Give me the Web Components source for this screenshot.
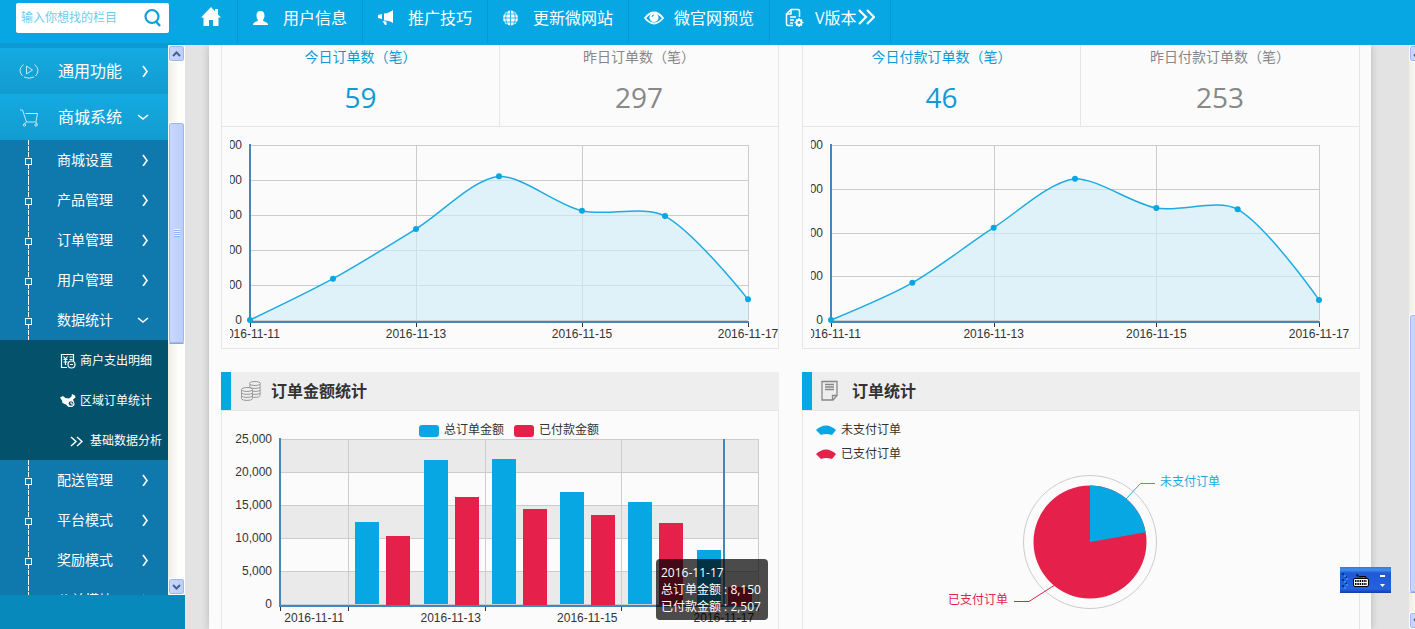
<!DOCTYPE html>
<html lang="zh-CN">
<head>
<meta charset="utf-8">
<title>商城后台 - 数据统计</title>
<style>
html, body { margin: 0; height: 100%; }
body { font-family: "Open Sans", "Noto Sans CJK SC", sans-serif; overflow: hidden; }
</style>
</head>
<body>
<admin-app></admin-app>
<script>
const FONT = '"Liberation Sans", "Noto Sans CJK SC", sans-serif';

function define(name, html, setup) {
  const tpl = document.createElement('template');
  tpl.innerHTML = html;
  customElements.define(name, class extends HTMLElement {
    constructor() {
      super();
      this.attachShadow({ mode: 'open' }).appendChild(tpl.content.cloneNode(true));
    }
    connectedCallback() { if (setup) setup(this, this.shadowRoot); }
  });
}

/* ---------- icons ---------- */
const ICONS = {
  home: [20, 20, '<path d="M10 0 0 10.500h2.500V19H8v-6h4v6h5.500v-8.500H20L17 7.500V2h-3v2.500z" fill="currentColor"/>'],
  user: [20, 20, '<path d="M7.500 3c3 0 4 2 4 5 0 2-1 3-1.500 4 0 2 5 1.500 5 5H0c0-3.500 5-3 5-5-.5-1-1.500-2-1.500-4 0-3 1-5 4-5z" fill="currentColor"/>'],
  horn: [20, 20, '<path d="M6 5.500c3.500 0 6-1.500 9-3.500v13c-3-2-5.500-2.500-9-2.500zM0 7l4-1v5l-4-1zM4.500 13l4 .5V17H7z" fill="currentColor"/>'],
  globe: [20, 20, '<circle cx="7.500" cy="10" r="7.500" fill="currentColor"/><path d="M0 10h15M1 6h13M1 14h13M7.500 2v16M4.500 3Q1 10 4.500 17M10.500 3q3.500 7 0 14" fill="none" stroke="#07a7e3" stroke-width=".8"/>'],
  eye: [20, 20, '<path d="M1 10Q10-1 19 10 10 21 1 10z" fill="none" stroke="currentColor" stroke-width="1.800"/><circle cx="10" cy="9.500" r="4.500" fill="currentColor"/><path d="M8 9a2 2 0 0 1 2-2" stroke="#07a7e3" fill="none"/>'],
  doc: [20, 20, '<path d="M8 17.500H3a1.500 1.500 0 0 1-1.500-1.500V6L6 1.500h7A1.500 1.500 0 0 1 14.500 3v6M6 2v4H2M5 9h6M5 12h4M5 15h3" fill="none" stroke="currentColor" stroke-width="1.500"/><circle cx="14" cy="14.500" r="2.500" fill="none" stroke="currentColor" stroke-width="2"/><path d="M14 10v9M9.500 14.500h9M11 11.500l6 6M17 11.500l-6 6" stroke="currentColor" stroke-width="1.200"/><circle cx="14" cy="14.500" r="1.500" fill="#07a7e3"/>'],
  double: [18, 20, '<path d="M2 2l7 7-7 7M10 2l7 7-7 7" fill="none" stroke="currentColor" stroke-width="2.200"/>'],
  search: [18, 20, '<circle cx="8" cy="8.500" r="6.500" fill="none" stroke="#0a9fda" stroke-width="2.200"/><path d="M12 13.500l4 4.500" stroke="#0a9fda" stroke-width="2.400"/>'],
  play: [20, 18, '<path d="M4.500 2.500Q-2 8 3.500 14M15.500 2.500Q22 8 16.500 14M5 15q5 2.500 10 0" fill="none" stroke="currentColor"/><path d="M7.500 4v8l6-4z" fill="none" stroke="currentColor"/>'],
  cart: [20, 20, '<path d="M1 3h2.500l4 12h10M6.500 6.500h12l-1.500 8" fill="none" stroke="currentColor"/><path d="M7.500 15l-3 2.500M17 15l1.500 2.500" stroke="currentColor"/><circle cx="5.500" cy="18" r="1.200" fill="none" stroke="currentColor"/><circle cx="17" cy="18" r="1.200" fill="none" stroke="currentColor"/>'],
  right: [12, 12, '<path d="M4 1l4 5.500L4 12" fill="none" stroke="currentColor" stroke-width="1.600"/>'],
  down: [12, 12, '<path d="M1 4l5 4 5-4" fill="none" stroke="currentColor" stroke-width="1.600"/>'],
  bill: [16, 16, '<path d="M7 14.500H1.500v-13h12V8M3.500 3.500l2 2.500 2-2.500M3.500 6.500h4M3.500 9h4M5.500 6v6M9.500 4h3M9.500 6.500h3" fill="none" stroke="currentColor" stroke-width="1.200"/><circle cx="11.500" cy="11.500" r="3.500" fill="none" stroke="currentColor" stroke-width="1.200"/><path d="M10 11.500h3" stroke="currentColor"/>'],
  map: [16, 16, '<path d="M0 4.500 3 3l2.500 2L9 5.500l2.500-2L12 1l3 1.500.5 2-2.500 2 1 2.500.5 3-2.500 2H8.500L6 11.500 2.500 10 2 7.500z" fill="currentColor"/><circle cx="11" cy="10.500" r="2.800" fill="#04516c" stroke="currentColor"/><path d="M11 8.500V11h2" stroke="currentColor" fill="none"/>'],
  more: [14, 14, '<path d="M1 3l5 4.500L1 12M7 3l5 4.500L7 12" fill="none" stroke="currentColor" stroke-width="1.400"/>'],
  coins: [22, 22, '<g fill="#eee" stroke="#999"><path d="M10 3.500v12c0 2.500 10 2.500 10 0v-12"/><ellipse cx="15" cy="3.500" rx="5.500" ry="2"/><path d="M9.500 6.500c0 2.500 11 2.500 11 0M9.500 9.500c0 2.500 11 2.500 11 0M9.500 12.500c0 2.500 11 2.500 11 0" /><path d="M1.500 9.500v9c0 2.500 11 2.500 11 0v-9"/><ellipse cx="7" cy="9.500" rx="5.500" ry="2"/><path d="M1.500 12.500c0 2.500 11 2.500 11 0M1.500 15.500c0 2.500 11 2.500 11 0"/></g>'],
  page: [22, 22, '<path d="M1 1.500h15v14l-4 4.500H1z" fill="none" stroke="#888" stroke-width="1.300"/><path d="M11.500 20v-4.500H16M4 4.500h9M4 7h9M4 9.500h9" fill="none" stroke="#888" stroke-width="1.300"/>']
};
define('ui-icon', '<style>:host{display:block;flex:none}svg{display:block}</style><div></div>', (el, root) => {
  const [w, h, body] = ICONS[el.getAttribute('name')];
  root.querySelector('div').innerHTML = `<svg width="${w}" height="${h}" viewBox="0 0 ${w} ${h}" aria-hidden="true">${body}</svg>`;
});

/* ---------- top bar ---------- */
define('search-box', `
<style>
:host { display: block; }
form { display: flex; align-items: center; box-sizing: border-box; width: 153px; height: 30px; padding: 0 7px 0 5px; background: #fff; border-radius: 2px; }
input { flex: 1; min-width: 0; border: 0; padding: 0; outline: 0; background: none; font: 12px/18px ${FONT}; color: #07a7e3; }
input::placeholder { color: #6ccdee; opacity: 1; }
button { border: 0; padding: 0; background: none; cursor: pointer; }
</style>
<form><input type="text" aria-label="栏目搜索" placeholder="输入你想找的栏目"><button type="button" aria-label="搜索"><ui-icon name="search"></ui-icon></button></form>`);

define('top-bar', `
<style>
:host { display: flex; background: #07a7e3; height: 45px; overflow: hidden; }
.brand { box-sizing: border-box; width: 185px; padding: 3px 0 0 16px; border-bottom: 2px solid #0a9ad6; }
.home { display: flex; width: 52px; justify-content: center; padding-top: 7px; color: #fff; box-sizing: border-box; }
nav { display: flex; height: 43px; border-right: 1px solid #0798d3; }
nav a { display: flex; align-items: center; box-sizing: border-box; height: 43px; padding: 0 15px 7px; border-left: 1px solid #0798d3; color: #fff; font-size: 16px; line-height: 24px; text-decoration: none; white-space: nowrap; }
nav a ui-icon:first-child { margin-right: 10px; }
</style>
<div class="brand"><search-box></search-box></div>
<a class="home" href="#" aria-label="首页"><ui-icon name="home"></ui-icon></a>
<nav>
<a href="#"><ui-icon name="user"></ui-icon>用户信息</a>
<a href="#"><ui-icon name="horn"></ui-icon>推广技巧</a>
<a href="#"><ui-icon name="globe"></ui-icon>更新微网站</a>
<a href="#"><ui-icon name="eye"></ui-icon>微官网预览</a>
<a href="#"><ui-icon name="doc"></ui-icon>V版本<ui-icon name="double"></ui-icon></a>
</nav>`);

/* ---------- scroll bar ---------- */
define('scroll-bar', `
<style>
:host { display: flex; flex-direction: column; width: 17px; background: linear-gradient(90deg, #efede4, #fdfdf9 60%, #fefefb); }
.btn, .thumb { box-sizing: border-box; width: 17px; border: 1px solid #fff; border-radius: 3px; background: linear-gradient(90deg, #cbd8ff, #bacdfb); box-shadow: inset 0 0 0 1px #9db8ee; flex: none; }
.btn { height: 17px; display: flex; align-items: center; justify-content: center; }
.thumb { display: flex; align-items: center; justify-content: center; margin-top: var(--before); height: var(--size); border-bottom-color: #8aa5dc; }
.grip { width: 6px; height: 8px; background: repeating-linear-gradient(#eef4fe 0 1px, #8cb0f8 1px 2px); }
.space { flex: 1; }
svg { display: block; }
</style>
<div class="btn"><svg width="9" height="6" viewBox="0 0 9 6"><path d="M1 5l3.500-3.500L8 5" fill="none" stroke="#4d6185" stroke-width="2"/></svg></div>
<div class="thumb"><div class="grip"></div></div>
<div class="space"></div>
<div class="btn"><svg width="9" height="6" viewBox="0 0 9 6"><path d="M1 1l3.500 3.500L8 1" fill="none" stroke="#4d6185" stroke-width="2"/></svg></div>`);

/* ---------- side menu ---------- */
define('side-menu', `
<style>
:host { display: flex; flex-direction: column; width: 185px; overflow: hidden; background: #0789bb; padding-bottom: 34px; box-sizing: border-box; }
.view { display: flex; flex: 1; min-height: 0; overflow: hidden; }
.view > nav { width: 168px; overflow: hidden; padding-top: 3px; box-sizing: border-box; background: #109ad3; }
a { display: flex; align-items: center; box-sizing: border-box; color: #fff; text-decoration: none; }
a span { flex: 1; white-space: nowrap; }
.group { height: 46px; padding: 0 17px 0 19px; background: linear-gradient(#14aae1, #129ccf); font-size: 16px; line-height: 24px; }
.group > ui-icon:first-child { width: 39px; opacity: .75; }
.item { height: 40px; padding-right: 17px; background: #0f78ad; font-size: 14px; line-height: 20px; }
.open { padding-right: 19px; }
.rail { position: relative; flex: none; width: 57px; height: 40px; background: linear-gradient(90deg, transparent 28px, #fff 28px 29px, transparent 29px); }
.rail::before { content: ""; display: block; height: 40px; background: repeating-linear-gradient(transparent 0 5px, #0f78ad 5px 6px); }
.rail::after { content: ""; position: absolute; left: 25px; top: 18px; width: 5px; height: 5px; border: 1px solid #fff; background: #0f78ad; }
.leaf { height: 40px; padding: 2px 0 0 60px; gap: 4px; background: #04516c; font-size: 12px; line-height: 18px; }
.deep { padding-left: 70px; gap: 6px; }
scroll-bar { --before: 60px; --size: 222px; }
</style>
<div class="view">
<nav></nav>
<scroll-bar></scroll-bar>
</div>`, (el, root) => {
  const group = (icon, t, a) => `<a class="group${a === 'down' ? ' open' : ''}" href="#"><ui-icon name="${icon}"></ui-icon><span>${t}</span><ui-icon name="${a}"></ui-icon></a>`;
  const item = (t, a = 'right') => `<a class="item${a === 'down' ? ' open' : ''}" href="#"><i class="rail"></i><span>${t}</span><ui-icon name="${a}"></ui-icon></a>`;
  const leaf = (icon, t, c = '') => `<a class="leaf ${c}" href="#"><ui-icon name="${icon}"></ui-icon><span>${t}</span></a>`;
  root.querySelector('nav').innerHTML =
    group('play', '通用功能', 'right') + group('cart', '商城系统', 'down') +
    item('商城设置') + item('产品管理') + item('订单管理') + item('用户管理') + item('数据统计', 'down') +
    leaf('bill', '商户支出明细') + leaf('map', '区域订单统计') + leaf('more', '基础数据分析', 'deep') +
    item('配送管理') + item('平台模式') + item('奖励模式') + item('公益模块');
});

/* ---------- cards ---------- */
define('stat-pair', `
<style>
:host { display: grid; grid-template-columns: 1fr 1fr; border-bottom: 1px solid #e6e6e6; }
div { text-align: center; color: #888; }
.now { color: #1199d4; border-right: 1px solid #e6e6e6; }
p { margin: 0; font-size: 14px; line-height: 24px; text-spacing-trim: space-all; }
strong { display: block; font-weight: 500; font-size: 28px; line-height: 57px; }
</style>
<div class="now"><p></p><strong></strong></div><div><p></p><strong></strong></div>`, (el, root) => {
  const p = root.querySelectorAll('p'), s = root.querySelectorAll('strong');
  p[0].textContent = '今日' + el.getAttribute('label') + '（笔）';
  p[1].textContent = '昨日' + el.getAttribute('label') + '（笔）';
  s[0].textContent = el.getAttribute('today');
  s[1].textContent = el.getAttribute('yesterday');
});

define('plain-card', '<style>:host{display:block;border:1px solid #e6e6e6;border-top:0;min-width:0}</style><slot></slot>');
define('titled-card', `
<style>
:host { display: block; min-width: 0; }
header { display: flex; align-items: center; height: 38px; gap: 9px; padding-left: 9px; border-left: 10px solid #07a7e3; background: #eee; }
h2 { margin: 0; font-size: 16px; line-height: 24px; font-weight: 700; color: #333; }
section { border: 1px solid #e6e6e6; }
</style>
<header><slot name="icon"></slot><h2><slot name="title"></slot></h2></header>
<section><slot></slot></section>`);

/* ---------- charts ---------- */
const DAYS = [11, 12, 13, 14, 15, 16, 17].map(d => '2016-11-' + d);
const CHART_CSS = `svg{display:block;width:100%}text{font:12px ${FONT};fill:#333}`;
const line = (x1, y1, x2, y2, c, w = 1) => `<path d="M${x1} ${y1}L${x2} ${y2}" stroke="${c}" stroke-width="${w}" fill="none"/>`;
function onResize(el, draw) {
  draw(el.clientWidth);
  new ResizeObserver(() => draw(el.clientWidth)).observe(el);
}

/* Bezier path through the points; tangents follow the neighbouring points and
   control points never leave the vertical range of the data. */
function smoothPath(pts, k = 0.3) {
  const ys = pts.map(p => p[1]), lo = Math.min(...ys), hi = Math.max(...ys);
  const fit = y => Math.max(lo, Math.min(hi, y));
  const ctl = pts.map((p, i) => {
    if (i === 0 || i === pts.length - 1) return [p, p];
    const a = pts[i - 1], b = pts[i + 1];
    const vx = (b[0] - a[0]) * k, vy = (b[1] - a[1]) * k;
    const d0 = Math.hypot(p[0] - a[0], p[1] - a[1]), d1 = Math.hypot(p[0] - b[0], p[1] - b[1]);
    const r0 = d0 / (d0 + d1), r1 = d1 / (d0 + d1);
    return [[p[0] - vx * r0, fit(p[1] - vy * r0)], [p[0] + vx * r1, fit(p[1] + vy * r1)]];
  });
  return 'M' + pts[0] + pts.slice(1).map((p, i) => `C${ctl[i][1]} ${ctl[i + 1][0]} ${p}`).join('');
}

define('line-chart', `<style>:host{display:block;margin-left:8px;overflow:hidden}${CHART_CSS}</style><svg height="221" role="img"></svg>`, (el, root) => {
  const values = el.getAttribute('values').split(',').map(Number);
  const max = +el.getAttribute('max'), inset = +el.getAttribute('inset');
  onResize(el, w => {
    const L = 20, R = w - inset, T = 18, B = 193, steps = max / 100;
    const X = i => L + (R - L) * i / 6;
    const pts = values.map((v, i) => [X(i), B - (B - T) * v / max]);
    let s = '';
    for (let i = 0; i <= steps; i++) {
      const y = Math.round(B - (B - T) * i / steps);
      s += line(L, y + .5, R, y + .5, '#ccc') + `<text x="${L - 8}" y="${y + 4}" text-anchor="end">${i * 100}</text>`;
    }
    for (const i of [2, 4, 6]) s += line(Math.round(X(i)) + .5, T, Math.round(X(i)) + .5, B, '#ccc');
    for (const i of [0, 2, 4, 6]) {
      s += line(Math.round(X(i)) + .5, B + 3, Math.round(X(i)) + .5, B + 7, '#333');
      s += `<text x="${X(i)}" y="211" text-anchor="middle">${DAYS[i]}</text>`;
    }
    s += line(L, T - 1, L, B + 3, '#48b', 2) + line(L - 1, B + 2, R + 1, B + 2, '#48b', 2);
    const d = smoothPath(pts);
    s += `<path d="${d}L${R} ${B}L${L} ${B}Z" fill="#cdebf8" fill-opacity=".6"/><path d="${d}" fill="none" stroke="#1eabe2" stroke-width="1.500"/>`;
    s += pts.map(p => `<circle cx="${p[0]}" cy="${p[1]}" r="3" fill="#07a7e3"/>`).join('');
    root.querySelector('svg').innerHTML = s;
  });
});

define('bar-chart', `
<style>
:host { display: block; position: relative; margin-left: 8px; }
${CHART_CSS}
.tip { position: absolute; right: 10px; top: 148px; box-sizing: border-box; min-width: 112px; padding: 5px; border-radius: 4px; background: rgba(0,0,0,.7); color: #fff; font-size: 12px; line-height: 17px; white-space: nowrap; }
</style>
<svg height="250" role="img"></svg>
<div class="tip">2016-11-17<br>总订单金额 : 8,150<br>已付款金额 : 2,507</div>`, (el, root) => {
  const total = [0, 12424, 21818, 21970, 17015, 15455, 8150];
  const paid = [0, 10300, 16212, 14394, 13485, 12270, 2507];
  onResize(el, w => {
    const L = 50, R = w - 20, T = 28, B = 193, step = (R - L) / 7, H = v => Math.round((B - T) * v / 25000);
    const edge = i => Math.round(L + step * i) + .5;
    let s = '';
    for (const i of [0, 2, 4]) s += `<rect x="${L}" y="${T + i * 33}" width="${R - L}" height="33" fill="#eaeaea"/>`;
    for (let i = 0; i <= 5; i++) {
      const y = T + i * 33;
      s += line(L, y + .5, R, y + .5, '#ccc') + `<text x="${L - 8}" y="${y + 4}" text-anchor="end">${((5 - i) * 5000).toLocaleString('en-US')}</text>`;
    }
    for (const i of [1, 3, 5, 7]) s += line(edge(i), T, edge(i), B, '#ccc');
    for (const i of [0, 1, 3, 5, 7]) s += line(edge(i), B + 3, edge(i), B + 7, '#333');
    s += line(L, T - 1, L, B + 3, '#48b', 2) + line(L - 1, B + 2, R + 1, B + 2, '#48b', 2);
    total.forEach((v, i) => {
      const x = Math.round(L + step * i + 7);
      if (v) s += `<rect x="${x}" y="${B - H(v)}" width="24" height="${H(v)}" fill="#07a7e3"/><rect x="${x + 31}" y="${B - H(paid[i])}" width="24" height="${H(paid[i]) + 1}" fill="#e5214b"/>`;
    });
    for (const i of [0, 2, 4, 6]) s += `<text x="${L + step * (i + .5)}" y="211" text-anchor="middle">${DAYS[i]}</text>`;
    s += line(Math.round(L + step * 6.5), T, Math.round(L + step * 6.5), B, '#48b', 2);
    const g = Math.round(w / 2) - 85;
    s += `<rect x="${g}" y="14" width="20" height="12" rx="3" fill="#07a7e3"/><text x="${g + 25}" y="23">总订单金额</text>`;
    s += `<rect x="${g + 95}" y="14" width="20" height="12" rx="3" fill="#e5214b"/><text x="${g + 120}" y="23">已付款金额</text>`;
    root.querySelector('svg').innerHTML = s;
  });
});

define('pie-chart', `<style>:host{display:block}${CHART_CSS} .b{fill:#1ba9df} .r{fill:#e5214b}</style><svg height="250" role="img"></svg>`, (el, root) => {
  onResize(el, w => {
    const cx = w / 2 + 9, cy = 131, r = 56.5, a = 80 * Math.PI / 180;
    const ex = cx + r * Math.sin(a), ey = cy - r * Math.cos(a);
    const fan = (y, c) => `<path d="M13 ${y}Q23 ${y - 9} 33 ${y}L29 ${y + 5}Q23 ${y + 3} 18 ${y + 5}Z" fill="${c}"/>`;
    root.querySelector('svg').innerHTML =
      fan(19, '#07a7e3') + fan(43, '#e5214b') +
      '<text x="38" y="23">未支付订单</text><text x="38" y="47">已支付订单</text>' +
      `<circle cx="${cx}" cy="${cy}" r="66.500" fill="none" stroke="#ccc"/>` +
      `<circle cx="${cx}" cy="${cy}" r="${r}" fill="#e5214b"/>` +
      `<path d="M${cx} ${cy}V${cy - r}A${r} ${r} 0 0 1 ${ex} ${ey}Z" fill="#07a7e3"/>` +
      `<path d="M${cx + 36} ${cy - 43}L${cx + 50.5} ${cy - 58.5}H${cx + 65}" fill="none" stroke="#1ba9df"/>` +
      `<path d="M${cx - 36} ${cy + 43.5}L${cx - 61} ${cy + 59.5}H${cx - 76}" fill="none" stroke="#e5214b"/>` +
      `<text class="b" x="${cx + 70}" y="${cy - 56}">未支付订单</text><text class="r" x="${cx - 142}" y="${cy + 62}">已支付订单</text>`;
  });
});

/* ---------- floating input-method bar ---------- */
define('ime-bar', `
<style>
:host { display: block; position: fixed; right: 24px; bottom: 36px; width: 51px; height: 26px; background: linear-gradient(#2f7be0, #3f8ee8 3px, #2058d6 6px, #2462e0 22px, #143ca8); }
svg { display: block; }
</style>
<svg width="51" height="26" viewBox="0 0 51 26" role="img" aria-label="输入法">
<path d="M2 6h2v2H2zM5 9h2v2H5zM2 12h2v2H2zM5 15h2v2H5zM2 18h2v2H2z" fill="#0a2a90"/><path d="M4 8h2v2H4zM6 11h2v2H6zM4 14h2v2H4zM6 17h2v2H6zM4 20h2v2H4z" fill="#2e8be6"/>
<path d="M17 7v2h2l1 1 1-1 1 1 1-1 1 1 1-1 1 1v2" fill="none" stroke="#000"/>
<rect x="13.500" y="11.500" width="15" height="8" rx="1.500" fill="#fff" stroke="#000"/>
<path d="M15 14h12M15 17h12" stroke="#000" stroke-width="2" stroke-dasharray="1.500 .8"/>
<path d="M40 8h5v2h-5zM40 17h5l-2.500 3z" fill="#fff"/></svg>`);

/* ---------- page ---------- */
define('admin-app', `
<style>
:host { display: flex; flex-direction: column; height: 100vh; overflow: hidden; }
.body { display: flex; flex: 1; min-height: 0; }
main { flex: 1; min-width: 0; display: flex; overflow: hidden; background: #e3e3e3; }
.paper { flex: 1; min-width: 0; margin: 0 38px 0 24px; padding: 0 11px 0 12px; background: #fbfbfb; box-shadow: 0 0 8px rgba(0,0,0,.2); display: grid; grid-template-columns: repeat(2, minmax(0, 1fr)); column-gap: 23px; row-gap: 23px; align-content: start; }
.edge { flex: none; width: 6px; display: flex; overflow: hidden; }
.edge scroll-bar { flex: none; --before: 252px; --size: 279px; }
</style>
<top-bar></top-bar>
<div class="body">
<side-menu></side-menu>
<main><div class="paper">
<plain-card><stat-pair label="订单数" today="59" yesterday="297"></stat-pair><line-chart values="0,118,260,411,312,297,59" max="500" inset="30"></line-chart></plain-card>
<plain-card><stat-pair label="付款订单数" today="46" yesterday="253"></stat-pair><line-chart values="0,85,211,323,256,253,46" max="400" inset="40"></line-chart></plain-card>
<titled-card><ui-icon slot="icon" name="coins"></ui-icon><span slot="title">订单金额统计</span><bar-chart></bar-chart></titled-card>
<titled-card><ui-icon slot="icon" name="page"></ui-icon><span slot="title">订单统计</span><pie-chart></pie-chart></titled-card>
</div></main>
<div class="edge"><scroll-bar></scroll-bar></div>
</div>
<ime-bar></ime-bar>`);
</script>
</body>
</html>
